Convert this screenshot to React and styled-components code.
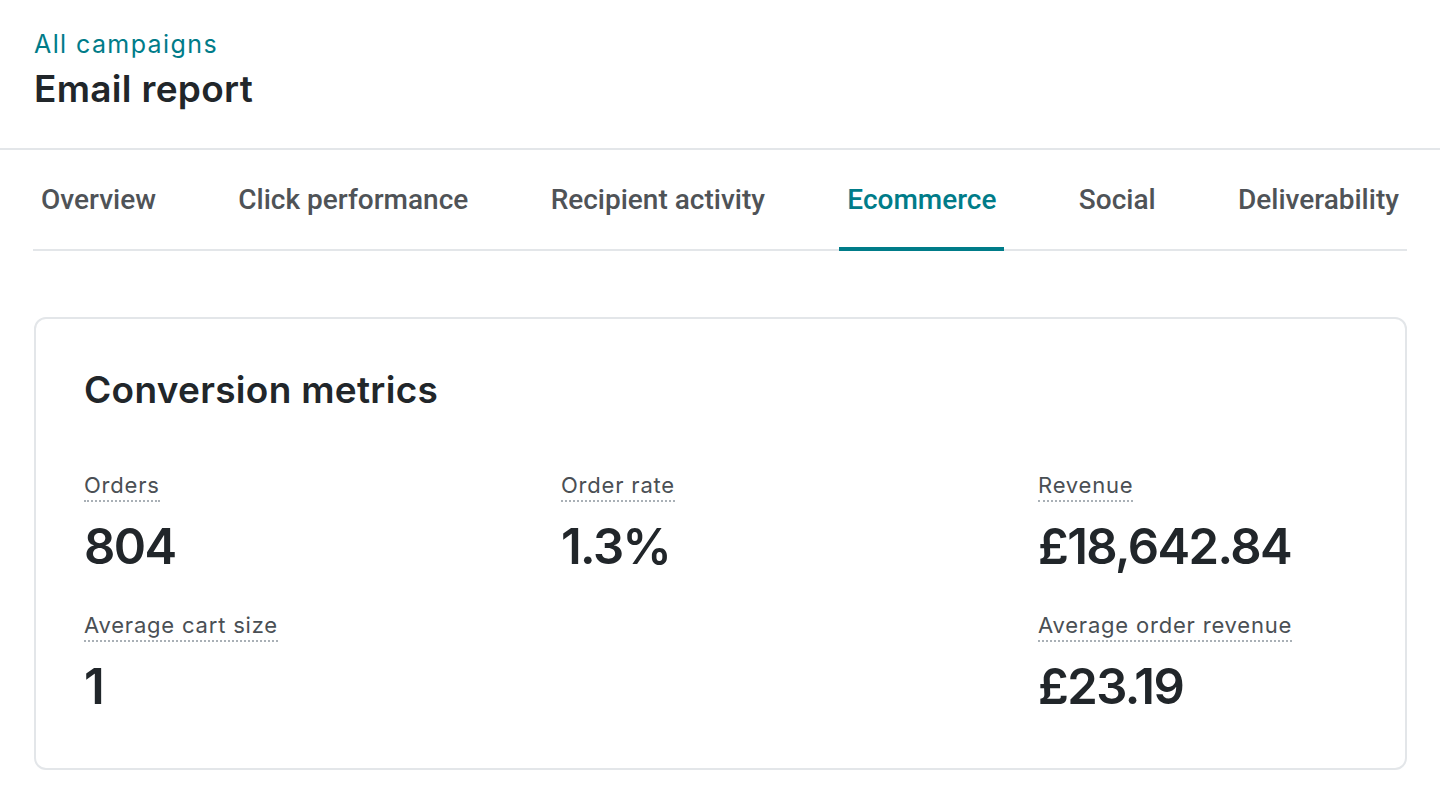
import React from 'react';
import styled, { createGlobalStyle } from 'styled-components';

const GlobalStyle = createGlobalStyle`
  html, body {
    margin: 0;
    padding: 0;
    background: #ffffff;
    font-family: Inter, "Open Sans", sans-serif;
    color: #241c15;
  }
`;

const Page = styled.div`
  width: 1440px;
  height: 810px;
  overflow: hidden;
  background: #ffffff;
`;

const Header = styled.header`
  padding: 26px 34px 36px;
  border-bottom: 2px solid #e3e6e9;
`;

const BackLink = styled.a`
  display: block;
  font-size: 25px;
  line-height: 36px;
  font-weight: 400;
  letter-spacing: 1.4px;
  color: #007c89;
  text-decoration: none;
`;

const Title = styled.h1`
  margin: 4px 0 0;
  font-size: 37px;
  line-height: 46px;
  font-weight: 600;
  color: #21262a;
  letter-spacing: 0.3px;
`;

const Body = styled.main`
  padding: 0 33px;
`;

const Tabs = styled.nav`
  display: flex;
  justify-content: space-between;
  border-bottom: 2px solid #e3e6e9;
  margin-top: 18px;
`;

const Tab = styled.a`
  padding: 16px 8px 31px;
  font-family: Roboto, "Noto Sans", sans-serif;
  font-size: 28px;
  line-height: 32px;
  font-weight: 500;
  color: ${p => (p.$active ? '#007c89' : '#4f5357')};
  border-bottom: 4px solid ${p => (p.$active ? '#007c89' : 'transparent')};
  margin-bottom: -2px;
  text-decoration: none;
  cursor: pointer;
`;

const Card = styled.section`
  margin-top: 66px;
  margin-left: 1px;
  border: 2px solid #e3e6e9;
  border-radius: 12px;
  padding: 48px 48px 50px;
`;

const CardTitle = styled.h2`
  margin: 0;
  font-size: 37px;
  line-height: 46px;
  font-weight: 600;
  color: #21262a;
  letter-spacing: 0.3px;
`;

const Grid = styled.div`
  display: grid;
  grid-template-columns: 477px 477px 1fr;
  row-gap: 32px;
  margin-top: 57px;
`;

const Metric = styled.div`
  display: flex;
  flex-direction: column;
  align-items: flex-start;
`;

const Label = styled.span`
  font-size: 22px;
  line-height: 30px;
  letter-spacing: 0.8px;
  color: #4a4f54;
  border-bottom: 2px dotted #a9b0b6;
`;

const Value = styled.span`
  margin-top: 14px;
  font-size: 49px;
  line-height: 62px;
  font-weight: 600;
  color: #21262a;
  letter-spacing: -1.6px;
`;

const tabs = ['Overview', 'Click performance', 'Recipient activity', 'Ecommerce', 'Social', 'Deliverability'];

const metrics = [
  { label: 'Orders', value: '804' },
  { label: 'Order rate', value: '1.3%' },
  { label: 'Revenue', value: '£18,642.84' },
  { label: 'Average cart size', value: '1' },
  null,
  { label: 'Average order revenue', value: '£23.19' },
];

export default function App() {
  return (
    <Page>
      <GlobalStyle />
      <Header>
        <BackLink>All campaigns</BackLink>
        <Title>Email report</Title>
      </Header>
      <Body>
        <Tabs>
          {tabs.map(t => (
            <Tab key={t} $active={t === 'Ecommerce'}>{t}</Tab>
          ))}
        </Tabs>
        <Card>
          <CardTitle>Conversion metrics</CardTitle>
          <Grid>
            {metrics.map((m, i) =>
              m ? (
                <Metric key={i}>
                  <Label>{m.label}</Label>
                  <Value>{m.value}</Value>
                </Metric>
              ) : (
                <div key={i} />
              )
            )}
          </Grid>
        </Card>
      </Body>
    </Page>
  );
}
